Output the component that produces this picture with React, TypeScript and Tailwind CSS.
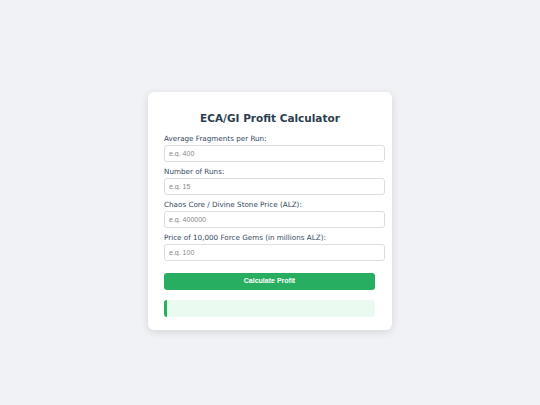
export default function App() {
  const fields = [
    { label: "Average Fragments per Run:", ph: "e.g. 400" },
    { label: "Number of Runs:", ph: "e.g. 15" },
    { label: "Chaos Core / Divine Stone Price (ALZ):", ph: "e.g. 400000" },
    { label: "Price of 10,000 Force Gems (in millions ALZ):", ph: "e.g. 100" },
  ];

  return (
    <div className="min-h-screen bg-[#f0f2f5] flex justify-center items-start pt-[92px] font-['DejaVu_Sans',sans-serif]">
      <div className="w-[244px] bg-white rounded-[6px] shadow-[0_2px_8px_rgba(0,0,0,0.12)] pt-[19px] pb-[13px] pl-4 pr-[16px]">
        <h1 className="text-center text-[10.5px] leading-[14px] font-bold text-[#2c3e50] mb-[9px]">
          ECA/GI Profit Calculator
        </h1>
        {fields.map((f) => (
          <div key={f.label} className="mb-[5px]">
            <label className="block text-[7.2px] leading-[10px] text-[#34495e] mb-[1px]">{f.label}</label>
            <input
              type="number"
              placeholder={f.ph}
              className="block w-[221px] h-[17px] px-[4px] border border-[#dddddd] rounded-[3px] bg-white text-[7px] font-['Liberation_Sans',sans-serif] placeholder:text-[#888888] outline-none"
            />
          </div>
        ))}
        <button className="mt-[5px] w-[211px] h-[17px] rounded-[3px] bg-[#27ae60] text-white text-[7px] font-bold font-['Liberation_Sans',sans-serif]">
          Calculate Profit
        </button>
        <div className="mt-[10px] w-[211px] h-[17px] rounded-[3px] bg-[#eafaf1] border-l-[3px] border-[#27ae60]"></div>
      </div>
    </div>
  );
}
